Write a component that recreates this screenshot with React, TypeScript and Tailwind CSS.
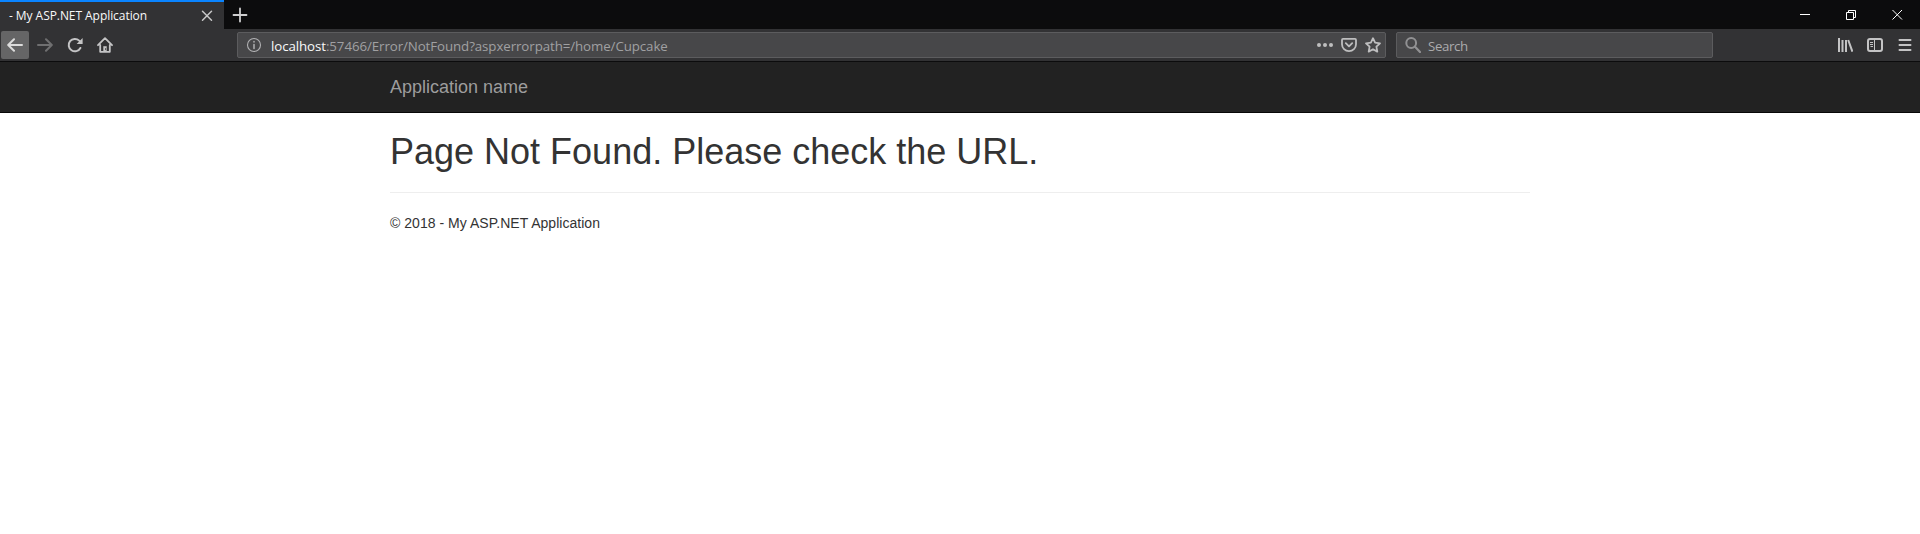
import type { ReactNode } from "react";

function Icon({ children, className = "" }: { children: ReactNode; className?: string }) {
  return (
    <svg
      viewBox="0 0 16 16"
      className={`size-4 shrink-0 ${className}`}
      fill="none"
      stroke="currentColor"
      strokeWidth="2"
      strokeLinecap="round"
      strokeLinejoin="round"
    >
      {children}
    </svg>
  );
}

function TabStrip() {
  return (
    <div className="flex h-[29px] bg-[#0c0c0d]">
      <div className="flex w-[224px] items-center justify-between border-t-2 border-[#0a84ff] bg-[#323234] pr-[9px] pl-[9px]">
        <span className="w-[140px] text-[12px] leading-4 tracking-[-0.06px] whitespace-nowrap text-[#f9f9fa]">
          - My ASP.NET Application
        </span>
        <Icon className="text-[#c8c8c8]">
          <path d="M3.5 3.2l9 9M12.5 3.2l-9 9" strokeWidth="1.5" />
        </Icon>
      </div>
      <div className="flex w-8 items-center justify-center text-[#cfcfd0]">
        <Icon>
          <path d="M8 1.5v13M1.5 8h13" strokeWidth="1.8" />
        </Icon>
      </div>
      <div className="ml-auto flex items-center gap-[30px] pr-[15px] pb-px text-white">
        <Icon>
          <path d="M3 8.5h10" strokeWidth="1" strokeLinecap="butt" />
        </Icon>
        <Icon>
          <path
            d="M3.5 6.5h7v7h-7zM5.5 6.5v-2h7v7h-2"
            strokeWidth="1"
            strokeLinecap="butt"
            strokeLinejoin="miter"
          />
        </Icon>
        <Icon>
          <path d="M3.5 4l9.5 9.5M13 4l-9.5 9.5" strokeWidth="1" strokeLinecap="butt" />
        </Icon>
      </div>
    </div>
  );
}

function Toolbar() {
  return (
    <div className="flex h-[33px] items-start border-b border-[#0c0c0d] bg-[#323234] pt-[3px] text-[#c4c4c5]">
      <div className="-mt-px flex w-[237px] items-center pl-px">
        <div className="flex size-7 items-center justify-center rounded-[2px] bg-[#656566] text-[#dcdcdc]">
          <Icon>
            <path d="M15 8H1.5M7 2.2L1.2 8 7 13.8" />
          </Icon>
        </div>
        <Icon className="ml-2 text-[#6f6f70]">
          <path d="M1 8h13.5M9 2.2L14.8 8 9 13.8" />
        </Icon>
        <Icon className="ml-[14px]">
          <path d="M13.4 11A6.2 6.2 0 1 1 12.2 3.6L13.6 5" />
          <path d="M15.6 1v6H9.6z" fill="currentColor" stroke="none" />
        </Icon>
        <Icon className="ml-[14px]">
          <path d="M1 8.2L8 1.2l7 7M3.2 8v6.8h9.6V8" strokeWidth="1.8" />
          <path d="M6.3 14.5V9.2h3.4v5.3z" fill="currentColor" stroke="none" />
          <path d="M8.6 11.5v1.2" stroke="#323234" strokeWidth="0.8" />
        </Icon>
      </div>
      <div className="flex h-[26px] w-[1149px] items-center rounded-[2px] border border-[#5c5c5e] bg-[#474749] pr-1 pl-2">
        <Icon className="text-[#b1b1b3]">
          <circle cx="8" cy="8" r="6.5" strokeWidth="1.1" />
          <path d="M8 7.5v4M8 4.6v.3" strokeWidth="1.5" />
        </Icon>
        <span className="ml-[9px] pt-[2px] text-[13.3px] leading-5 tracking-[-0.085px] whitespace-nowrap text-[#a0a0a2]">
          <span className="text-[#f9f9fa]">localhost</span>
          :57466/Error/NotFound?aspxerrorpath=/home/Cupcake
        </span>
        <div className="ml-auto flex items-center gap-2 text-[#bebebf]">
          <Icon>
            <g fill="currentColor" stroke="none">
              <circle cx="2" cy="8" r="2" />
              <circle cx="8" cy="8" r="2" />
              <circle cx="14" cy="8" r="2" />
            </g>
          </Icon>
          <Icon>
            <path d="M2 1.9h12q1 0 1 1v4.3a7 7 0 0 1-14 0V2.9q0-1 1-1z" strokeWidth="1.8" />
            <path d="M4.8 6.2L8 9.3l3.2-3.1" strokeWidth="1.8" />
          </Icon>
          <Icon>
            <path
              d="M8 1.2l2.1 4.4 4.9.7-3.6 3.4.9 4.9L8 12.2l-4.3 2.4.9-4.9L1 6.3l4.9-.7z"
              strokeWidth="1.8"
            />
          </Icon>
        </div>
      </div>
      <div className="ml-[10px] flex h-[26px] w-[317px] items-center rounded-[2px] border border-[#5c5c5e] bg-[#474749] pl-2">
        <Icon className="text-[#919193]">
          <circle cx="6.2" cy="6" r="4.9" />
          <path d="M9.8 9.6l5.2 5.3" strokeWidth="2.2" />
        </Icon>
        <span className="ml-[7px] pt-[2px] text-[13.3px] leading-5 tracking-[-0.4px] text-[#ababad]">
          Search
        </span>
      </div>
      <div className="ml-auto flex h-[26px] items-center gap-[14px] pr-[7px]">
        <Icon>
          <path d="M2 1v14M5.5 3v12M9 3v12M11.2 3l4.2 11.6" strokeLinecap="butt" />
        </Icon>
        <Icon>
          <rect x="1" y="2" width="14" height="12" rx="2" />
          <path d="M7.5 2v12" strokeWidth="1" />
          <path d="M3 5.5h3M3 7.5h3M3.5 9.5H6" strokeWidth="1" strokeLinecap="butt" />
        </Icon>
        <Icon>
          <path d="M2.5 3h11M2.5 8h11M2.5 13h11" />
        </Icon>
      </div>
    </div>
  );
}

export default function App() {
  return (
    <div className="h-[534px] overflow-hidden bg-white font-['Liberation_Sans',Arial,sans-serif] text-[#333]">
      <header className="font-['Open_Sans','Noto_Sans',sans-serif]">
        <TabStrip />
        <Toolbar />
      </header>
      <nav className="h-[51px] border-b border-[#080808] bg-[#222]">
        <div className="mx-auto w-[1140px] pt-[15px] text-[18px] leading-5 text-[#9d9d9d]">
          Application name
        </div>
      </nav>
      <main className="mx-auto w-[1140px] pt-[19px]">
        <h1 className="text-[36px] leading-[40px]">Page Not Found. Please check the URL.</h1>
        <hr className="mt-5 border-[#eee]" />
        <footer className="mt-5">
          <p className="text-[14px] leading-5 tracking-[0.03px]">© 2018 - My ASP.NET Application</p>
        </footer>
      </main>
    </div>
  );
}
